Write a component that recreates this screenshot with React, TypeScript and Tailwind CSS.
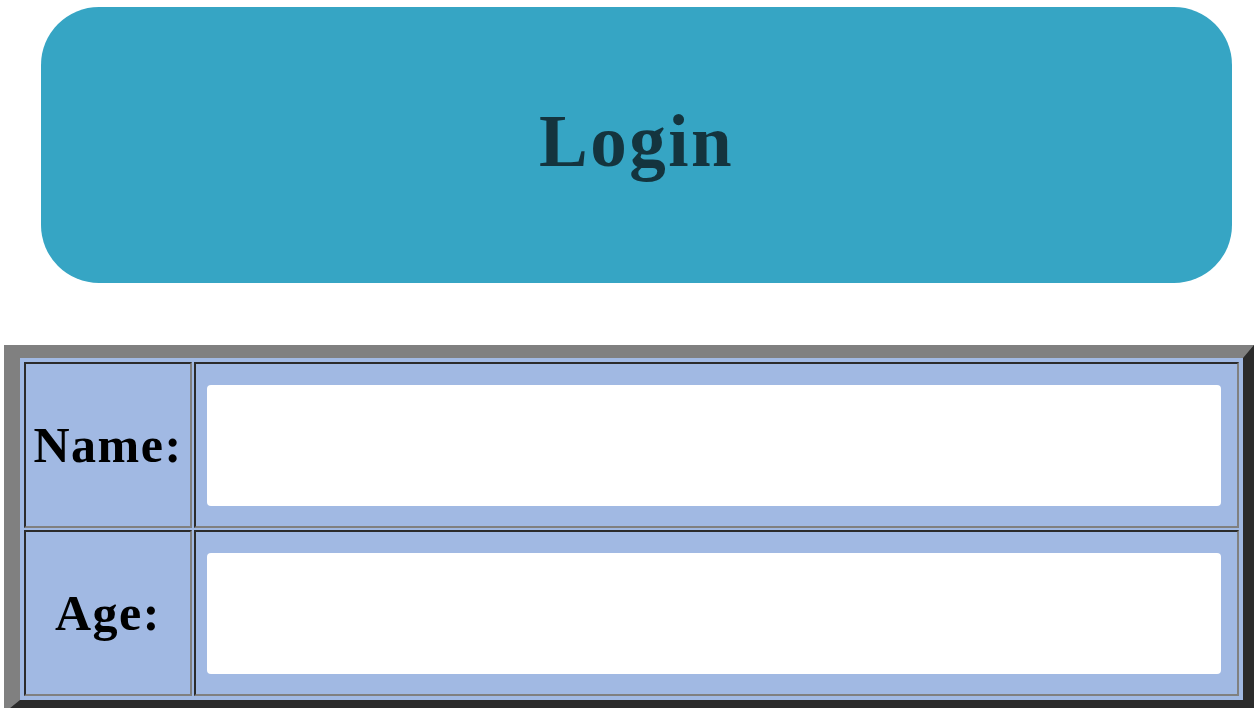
import { useState } from "react";

const serif = { fontFamily: '"Liberation Serif", "Times New Roman", serif' };

const fields = [
  { label: "Name:", key: "name" },
  { label: "Age:", key: "age" },
];

const App = () => {
  const [values, setValues] = useState<Record<string, string>>({ name: "", age: "" });

  return (
    <div className="w-[1254px] h-[708px] overflow-hidden bg-white" style={serif}>
      {/* Header */}
      <div className="mt-[7px] ml-[41px] w-[1191px] h-[276px] rounded-[58px] bg-[#36a5c4] flex items-center justify-center pb-[8px]">
        <h1 className="text-[73px] leading-none font-bold tracking-[2.5px] text-[#14343e]">Login</h1>
      </div>

      {/* Form table */}
      <table
        className="mt-[62px] ml-[4px] w-[1250px] border-separate border-spacing-[2px] p-[2px] bg-[#a1b9e3] border-solid border-t-[13px] border-l-[16px] border-r-[11px] border-b-[13px] border-t-[#808080] border-l-[#808080] border-r-[#2b2b2b] border-b-[#2b2b2b]"
      >
        <tbody>
          {fields.map((f) => (
            <tr key={f.key}>
              <td className="w-[168px] h-[166px] p-0 text-center align-middle border-2 border-solid border-t-[#2b2b2b] border-l-[#2b2b2b] border-r-[#808080] border-b-[#808080]">
                <span className="text-[50px] font-bold tracking-[1.5px] text-black whitespace-nowrap">{f.label}</span>
              </td>
              <td className="h-[166px] pl-[11px] pr-[16px] py-0 align-middle border-2 border-solid border-t-[#2b2b2b] border-l-[#2b2b2b] border-r-[#808080] border-b-[#808080]">
                <input
                  type="text"
                  value={values[f.key]}
                  onChange={(e) => setValues({ ...values, [f.key]: e.target.value })}
                  className="block w-full h-[121px] bg-white rounded-[4px] outline-none border-0 px-2 text-[40px]"
                />
              </td>
            </tr>
          ))}
        </tbody>
      </table>
    </div>
  );
};

export default App;
